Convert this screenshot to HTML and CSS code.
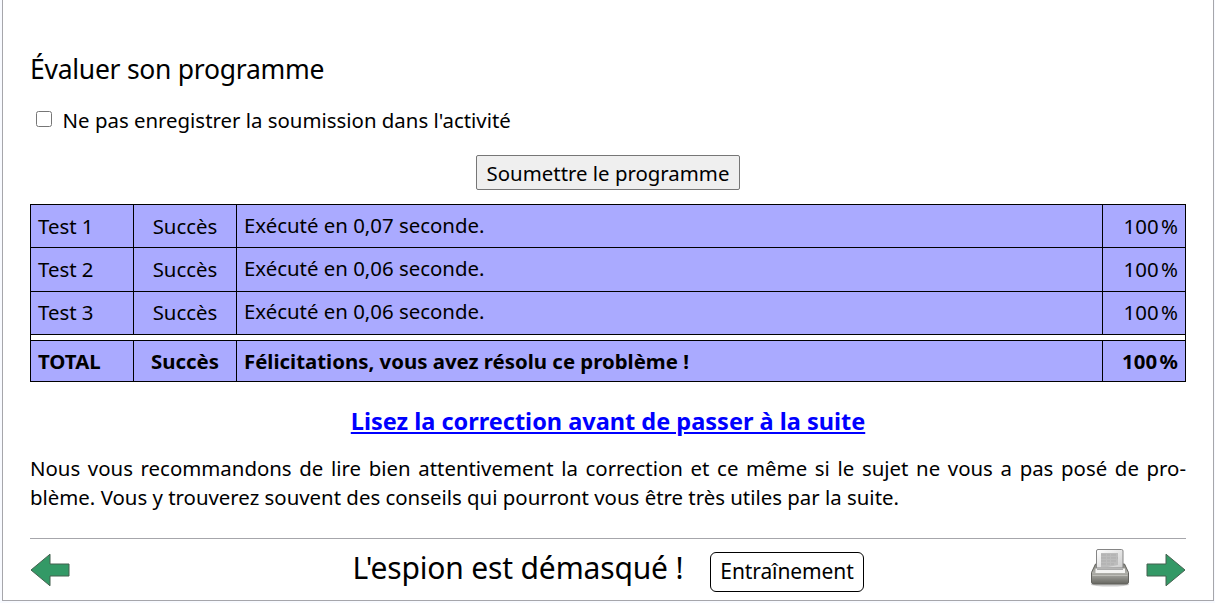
FILE: index.html
```html
<!DOCTYPE html>
<html lang="fr">
<head>
<meta charset="utf-8">
<title>L'espion est démasqué !</title>
<link rel="stylesheet" href="styles.css">
</head>
<body>
<main class="sheet">
  <h2 class="heading">Évaluer son programme</h2>
  <label class="option"><input type="checkbox" class="check"><span>Ne pas enregistrer la soumission dans l'activité</span></label>
  <div class="submit-row"><button class="submit" type="button">Soumettre le programme</button></div>
  <div class="results">
    <div class="row"><span>Test 1</span><span class="status">Succès</span><span class="message">Exécuté en 0,07 seconde.</span><span class="score">100 %</span></div>
    <div class="row tall"><span>Test 2</span><span class="status">Succès</span><span class="message">Exécuté en 0,06 seconde.</span><span class="score">100 %</span></div>
    <div class="row third"><span>Test 3</span><span class="status">Succès</span><span class="message">Exécuté en 0,06 seconde.</span><span class="score">100 %</span></div>
    <div class="row total"><span>TOTAL</span><span class="status">Succès</span><span>Félicitations, vous avez résolu ce problème !</span><span class="score">100 %</span></div>
  </div>
  <h3 class="correction"><a href="#">Lisez la correction avant de passer à la suite</a></h3>
  <p class="advice"><span class="line">Nous vous recommandons de lire bien attentivement la correction et ce même si le sujet ne vous a pas posé de pro-</span><span>blème. Vous y trouverez souvent des conseils qui pourront vous être très utiles par la suite.</span></p>
  <footer class="footer">
    <svg class="arrow" viewBox="0 0 40 34"><path d="M1 17 20 1.2V11H39V23H20V32.8Z"/></svg>
    <div class="title"><span class="name">L'espion est démasqué !</span><span class="badge">Entraînement</span></div>
    <div class="tools">
      <svg class="printer" viewBox="0 0 40 40">
        <defs>
          <linearGradient id="body" x2="0" y2="1"><stop stop-color="#85857f"/><stop offset=".45" stop-color="#b0b0aa"/><stop offset="1" stop-color="#666660"/></linearGradient>
          <linearGradient id="paper" x2="1" y2="1"><stop stop-color="#fff"/><stop offset="1" stop-color="#ccc"/></linearGradient>
        </defs>
        <ellipse cx="20" cy="36.500" rx="19" ry="2" fill="#ccc"/>
        <path d="M5.500 16H34.500L38.500 24.500V34Q38.500 36 36.500 36H3.500Q1.500 36 1.500 34V24.500Z" fill="url(#body)" stroke="#62625d"/>
        <path d="M6.500 20V3Q6.500 1.500 8 1.500H31.500Q33 1.500 33 3V20Z" fill="url(#paper)" stroke="#858585"/>
        <path d="M11 5H28V17L18 19H11Z" fill="#bcbcbc"/>
        <path d="M11 7H26M11 10H28M11 13H27M11 16H24" stroke="#adadad" stroke-dasharray="5 1 3 1"/>
        <path d="M5.500 20.500H35V25H5.500Z" fill="#f3f3f1"/>
        <path d="M7 20.500H33V22H7Z" fill="#aaa"/>
        <path d="M2.500 27.500H37.500" stroke="#bebeb8"/>
      </svg>
      <svg class="arrow" viewBox="0 0 40 34"><path d="M39 17 20 1.200V11H1V23H20V32.800Z"/></svg>
    </div>
  </footer>
</main>
</body>
</html>
```
FILE: styles.css
```css
* { box-sizing: border-box; }
body {
  margin: 0;
  padding: 0 1px 0 2px;
  height: 603px;
  overflow: hidden;
  background: #f8faff;
  color: #000;
  font: 20.4px/29px "Noto Sans", sans-serif;
}
.sheet {
  height: 601px;
  padding: 51px 27px 0;
  background: #fff;
  border: 1px solid #a6a6ab;
  border-top: 0;
}
.heading { margin: 0; font-size: 26.5px; line-height: 37px; font-weight: 400; letter-spacing: -.27px; white-space: nowrap; }
.option { display: flex; align-items: center; height: 29px; margin-top: 18px; white-space: nowrap; }
.check { width: 16px; height: 16px; margin: 0 11px 3px 6px; }
.option span { margin-left: -.4px; }
.submit-row { display: flex; justify-content: center; margin-top: 20px; }
.submit {
  width: 264px;
  height: 35px;
  padding: 2px 0 0;
  border: 1px solid #767676;
  border-radius: 2px;
  background: #efefef;
  color: #000;
  font: inherit;
  white-space: nowrap;
}
.results { margin-top: 14px; border: 1px solid #000; }
.row {
  display: grid;
  grid-template-columns: 103px 103px 866px 82px;
  height: 43px;
  border-bottom: 1px solid #000;
  background: #aaf;
  line-height: 43px;
  white-space: nowrap;
}
.row > span { padding-left: 7px; border-right: 1px solid #000; }
.row.tall { height: 44px; }
.row.third { line-height: 41px; }
.row > .status { padding: 0; text-align: center; }
.row > .message { line-height: 41px; }
.row.third > .message { line-height: 39px; }
.row > .score { padding: 0 7px 0 0; border: 0; text-align: right; word-spacing: -2.8px; }
.row.total {
  height: 41px;
  margin-top: 5px;
  border-top: 1px solid #000;
  border-bottom: 0;
  line-height: 41px;
  font-weight: 700;
}
.correction { margin: 22px 0 0; text-align: center; font-size: 23.5px; line-height: 34px; font-weight: 700; }
.correction a { color: #00f; }
.advice { margin: 16px 0 0; }
.advice span { display: block; white-space: nowrap; }
.advice .line { text-align-last: justify; }
.footer {
  display: flex;
  align-items: flex-start;
  justify-content: space-between;
  height: 62px;
  margin-top: 26px;
  border-top: 1px solid #a6a6ab;
}
.arrow { width: 40px; height: 34px; margin-top: 14px; fill: #339966; stroke: #44614f; stroke-width: 1; }
.title { display: flex; margin-left: 55px; }
.name { width: 358px; margin-top: 8px; padding-left: 1px; font-size: 30px; line-height: 42px; letter-spacing: -.16px; white-space: nowrap; }
.badge {
  width: 154px;
  height: 40px;
  margin-top: 13px;
  padding-left: 1px;
  border: 1px solid #000;
  border-radius: 6px;
  font-size: 21px;
  line-height: 37px;
  letter-spacing: -.1px;
  text-align: center;
}
.tools { display: flex; gap: 16px; }
.printer { width: 40px; height: 40px; margin-top: 9px; }
```
